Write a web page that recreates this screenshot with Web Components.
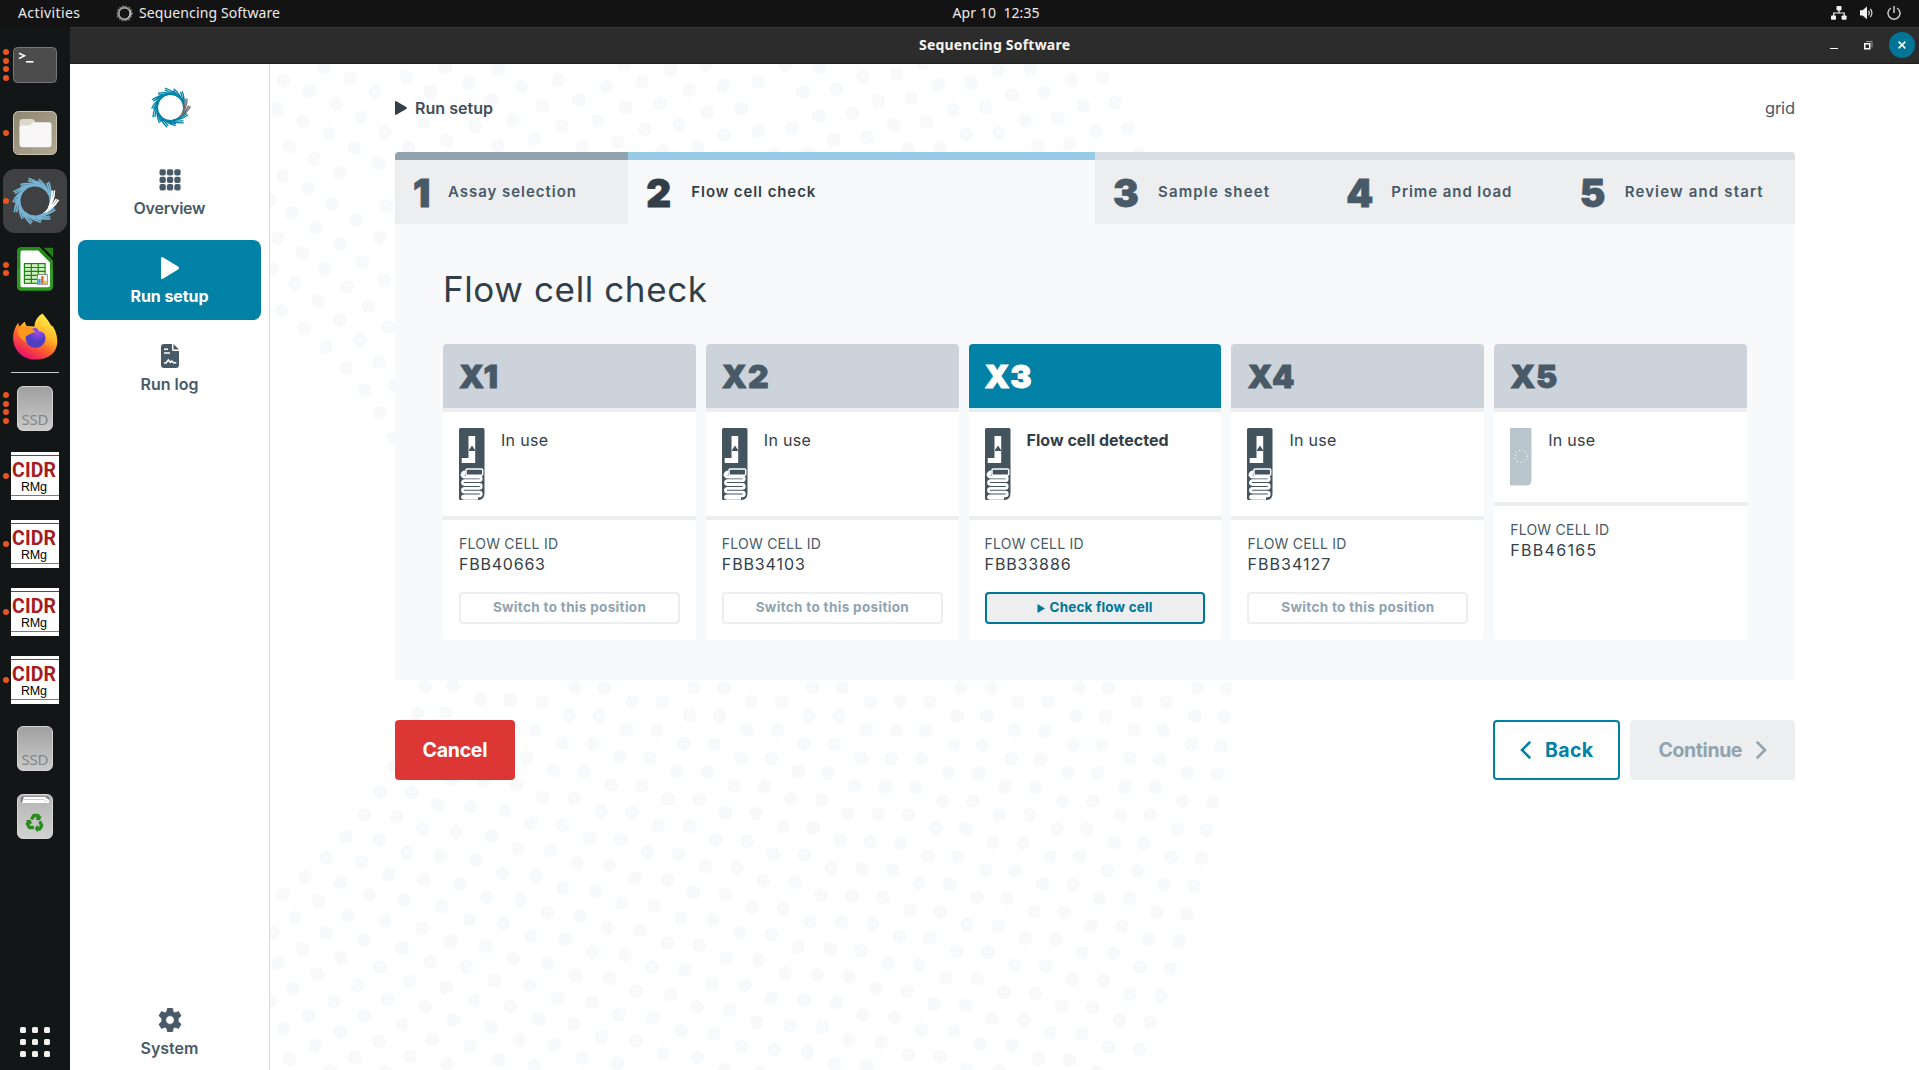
<!DOCTYPE html>
<html lang="en">
<head>
<meta charset="utf-8">
<title>Sequencing Software</title>
<style>
html,body{margin:0;height:100%;overflow:hidden;background:#fff}
body{font-family:Inter,"Liberation Sans",Arial,sans-serif}
</style>
</head>
<body>
<desktop-shell></desktop-shell>
<script>
const def=(name,html,setup)=>{
  const t=document.createElement('template');t.innerHTML=html;
  customElements.define(name,class extends HTMLElement{
    constructor(){super();this.attachShadow({mode:'open'}).append(t.content.cloneNode(true));if(setup)setup(this,this.shadowRoot)}
  });
};

/* Ring of swept double-stroke blades used as the application mark */
const swirl=(main,accent,w)=>{
  let s='';const n=14;
  const p=(r,a)=>(r*Math.cos(a)).toFixed(2)+' '+(r*Math.sin(a)).toFixed(2);
  for(let i=0;i<n;i++){
    const a=(i*360/n-3)*Math.PI/180,R=i%2?18.9:20.1,c=(i===0||i===n-1)?accent:main;
    s+=`<path d="M${p(R,a)}Q${p(16.8,a+.5)} ${p(13.5,a+1.3)}M${p(R-1.7,a-.05)}Q${p(15.2,a+.42)} ${p(13.1,a+1.05)}" stroke="${c}" stroke-width="${w}" fill="none"/>`;
  }
  return `<svg viewBox="-20.5 -20.5 41 41" width="100%" height="100%">${s}</svg>`;
};
def('swirl-mark','<style>:host{display:block;width:40px;height:40px}svg{display:block;overflow:visible}</style><div style="height:100%"></div>',(h,r)=>{
  r.querySelector('div').innerHTML=swirl(h.getAttribute('main'),h.getAttribute('accent'),h.getAttribute('w')||1.5);
});

/* ---------- desktop bars ---------- */
def('top-bar',`<style>
:host{display:grid;grid-template-columns:1fr auto 1fr;height:27px;background:#131313;color:#ececec;font:14px/22px "Noto Sans",sans-serif;align-items:center;box-sizing:border-box;padding:0 18px 0 18px}
.l{display:flex;align-items:center}.l swirl-mark{width:17px;height:17px;margin:0 6px 0 36px}
.clock{margin-left:73px}
.r{display:flex;justify-content:flex-end;align-items:center;gap:12px;padding-bottom:1px}svg{display:block}fit-text{margin-top:-1px}
</style>
<div class="l"><fit-text w="62">Activities</fit-text><swirl-mark main="#bdbdbd" accent="#fff" w="1.3"></swirl-mark><fit-text w="141">Sequencing Software</fit-text></div>
<fit-text class="clock" w="87">Apr 10  12:35</fit-text>
<div class="r">
<svg width="16" height="14" viewBox="0 0 16 14" fill="#f2f2f2"><rect x="5.500" y="0" width="5" height="4.400" rx=".8"/><rect x="0" y="9.400" width="5" height="4.400" rx=".8"/><rect x="10.600" y="9.400" width="5" height="4.400" rx=".8"/><path d="M8 4v3M2.700 10V7h10.500v3" fill="none" stroke="#f2f2f2" stroke-width="1.200"/></svg>
<svg width="16" height="14" viewBox="0 0 16 14" fill="#f2f2f2"><path d="M1 4.300h2.600L8 .6v12.600L3.600 9.600H1z"/><path d="M9.600 4.600q1.600 2.400 0 4.800M11.400 2.800q3 4.200 0 8.400" fill="none" stroke="#d8d8d8" stroke-width="1.200"/></svg>
<svg width="14" height="14" viewBox="0 0 14 14" fill="none" stroke="#d6d6d6" stroke-width="1.400"><path d="M4 2a6 6 0 1 0 6 0M7 0v7"/></svg>
</div>`);

def('title-bar',`<style>
:host{display:grid;grid-template-columns:1fr auto 1fr;height:37px;background:#2c2c2c;border-top:1px solid #3b3b3b;border-bottom:1px solid #1f1f1f;box-sizing:border-box;align-items:center;color:#f5f5f5;font:bold 14px/22px "Noto Sans",sans-serif;padding-right:4px}
.t{margin:-2px 0 0 4px}
.r{display:flex;justify-content:flex-end;align-items:center}
.m{width:8px;height:1px;background:#fff;margin:5px 26px 0 0}.c{width:26px;height:26px;border-radius:50%;background:#007595;display:grid;place-items:center;margin-left:16px;margin-top:-1px}svg{display:block}
</style><span></span><fit-text class="t" w="151">Sequencing Software</fit-text>
<div class="r"><i class="m"></i><svg width="9" height="9" viewBox="0 0 9 9"><rect x=".75" y="2.750" width="5" height="5" fill="none" stroke="#fff" stroke-width="1.500"/><path d="M2 .5h6v6" fill="none" stroke="#999"/></svg><span class="c"><svg width="8" height="8" viewBox="0 0 8 8"><path d="M.6.6l6.800 6.800M7.400.6L.6 7.400" stroke="#fff" stroke-width="1.500"/></svg></span></div>`);

/* ---------- dock ---------- */
def('dock-item',`<style>
:host{display:flex;height:68px;width:70px;align-items:center}
.d{width:9px;padding-left:3px;box-sizing:border-box;display:flex;flex-direction:column;gap:2.700px;position:relative;z-index:1}
.d i{width:6px;height:6px;border-radius:50%;background:#e95420}
.b{width:64px;height:64px;margin-left:-6px;border-radius:12px;display:grid;place-items:center}
:host([active]) .b{background:#3f4042}
</style><div class="d"></div><div class="b"><slot></slot></div>`,(h,r)=>{
  r.querySelector('.d').innerHTML='<i></i>'.repeat(+h.getAttribute('dots')||0);
});
def('cidr-icon',`<style>:host{display:flex;flex-direction:column;align-items:center;width:48px;height:48px;background:#fff;box-sizing:border-box;padding-top:3px}
hr{width:48px;height:1px;margin:0;border:0;background:#bb1e2c}b{font:bold 19.500px/24px Roboto,sans-serif;color:#a51d1d;margin-top:3px;margin-left:-2px;height:21px}
span{font:12.500px/14px "Liberation Sans",sans-serif;color:#000;height:15px;margin-left:-2px}hr+b+span+hr{background:#d0545c}</style>
<hr><b><fit-text w="44">CIDR</fit-text></b><span><fit-text w="26">RMg</fit-text></span><hr>`);
def('ssd-icon',`<style>:host{display:flex;align-items:flex-end;justify-content:center;width:36px;height:45px;border-radius:6px;box-sizing:border-box;border:1px solid #d2d2d2;background:linear-gradient(#a0a0a0,#cbcbcb);color:#858585;font:15px/18px "Noto Sans",sans-serif;padding-bottom:2px}</style><fit-text w="27">SSD</fit-text>`);
def('side-dock',`<style>
:host{display:flex;flex-direction:column;width:70px;background:#121617;padding-top:4px;box-sizing:border-box}
.sep{height:1px;margin:1px 11px;background:#c9cccc}svg{display:block}.sp{flex:1}
.apps{display:grid;grid-template-columns:repeat(3,6px);gap:6px;padding:0 0 13px 20px}.apps i{height:6px;border-radius:1.500px;background:#f3f1ee}
</style>
<dock-item dots="4"><svg width="44" height="36" viewBox="0 0 44 36"><rect x=".5" y=".5" width="43" height="35" rx="4" fill="#4c4c4c" stroke="#777"/><path d="M6 6.200l5.500 2.600L6 11.500" fill="none" stroke="#fff" stroke-width="1.500"/><path d="M13 14.800h7.500" stroke="#fff" stroke-width="1.600"/></svg></dock-item>
<dock-item dots="1"><svg width="44" height="44" viewBox="0 0 44 44"><defs><linearGradient id="g" x2="1" y2="1"><stop stop-color="#8f8672"/><stop offset="1" stop-color="#aea792"/></linearGradient></defs><rect x=".5" y=".5" width="43" height="43" rx="5" fill="url(#g)" stroke="#c9c4b4"/><path d="M6.500 11q0-3 3-3h9.500q1.500 0 2.500 1.500l1.500 2.500h12v8h-28.500z" fill="#dcd8ca"/><path d="M6.500 16.500q0-2 2-2h8l3-2.500q.8-.8 2-.8h14.500q2.500 0 2.500 2.500v19.500q0 3-3 3h-26q-3 0-3-3z" fill="#f8f7f5"/></svg></dock-item>
<dock-item dots="1" active><swirl-mark style="width:48px;height:48px" main="#76b2d2" accent="#fff" w="1.4"></swirl-mark></dock-item>
<dock-item dots="2"><svg width="36" height="44" viewBox="0 0 36.500 44"><path d="M4.500 0H23l13.500 14v25.500q0 4.500-4.500 4.500h-27.500Q0 44 0 39.500v-35Q0 0 4.500 0z" fill="#2e9a20"/><path d="M0 22V4.500Q0 0 4.500 0H23l13.500 14v8z" fill="#278a1b"/><path d="M5 3.300h16.500L33.500 15.500v23q0 2-2 2h-26q-2 0-2-2v-33q0-2.200 1.500-2.200z" fill="#fff"/><path d="M27 .5h9.500v9.500z" fill="#257f18"/><g fill="#cdf2c0" stroke="#1b8212" stroke-width="1.200"><rect x="7.500" y="16.500" width="21" height="20"/><path d="M7.500 20.500h21M7.500 24.500h21M7.500 28.500h21M7.500 32.500h21M14.500 16.500v20M21.500 16.500v20" fill="none"/></g><rect x="20.700" y="27.700" width="10" height="9.800" fill="#fff" stroke="#888"/><path d="M21.500 32h2.500v5h-2.500z" fill="#2e9be0"/><path d="M24.500 29.300h2.500v7.700h-2.500z" fill="#e0622c"/><path d="M27.500 34h2.500v3h-2.500z" fill="#f2b01e"/></svg></dock-item>
<dock-item><svg width="46" height="48" viewBox="-.5 .5 46 48"><defs><linearGradient id="f" x1=".8" y1=".05" x2=".25" y2="1"><stop stop-color="#fff04a"/><stop offset=".38" stop-color="#ffb527"/><stop offset=".65" stop-color="#ff5a2c"/><stop offset="1" stop-color="#e4047a"/></linearGradient><radialGradient id="v" cx=".6" cy=".2"><stop stop-color="#a24bee"/><stop offset="1" stop-color="#4d3fc0"/></radialGradient></defs><path d="M30 1c4 5 6 7 8.500 12 1 .5 2 0 2.500 2 8 14 4 32-18 32C8 47 0 35 .600 24 1 18 3.500 13 6 10c0 2 0 3 1 4 2-2 4-4 5-5l2 4.500q4 0 8 .5C22 8 26 3 30 1z" fill="url(#f)"/><circle cx="23" cy="25.500" r="10" fill="url(#v)"/><path d="M6 16c6-4 14-2 17 4-5 0-5 2-8 3s-3 4 0 7c-7-2-11-8-9-14z" fill="#ff961f"/><path d="M23 14c7-1 11 4 11 10-2-4-5-5-7-5z" fill="#ffbd2c"/></svg></dock-item>
<div class="sep"></div>
<dock-item dots="4"><ssd-icon></ssd-icon></dock-item>
<dock-item dots="1"><cidr-icon></cidr-icon></dock-item>
<dock-item dots="1"><cidr-icon></cidr-icon></dock-item>
<dock-item dots="1"><cidr-icon></cidr-icon></dock-item>
<dock-item dots="1"><cidr-icon></cidr-icon></dock-item>
<dock-item><ssd-icon></ssd-icon></dock-item>
<dock-item><svg width="36" height="45" viewBox="0 0 37 45" preserveAspectRatio="none"><defs><linearGradient id="t" x2="0" y2="1"><stop stop-color="#b4b4b4"/><stop offset="1" stop-color="#d2d2d2"/></linearGradient></defs><rect x=".5" y=".5" width="36" height="44" rx="5.500" fill="url(#t)" stroke="#d9d9d9"/><path d="M4 4q0-1.500 2-1.500h25q2 0 2 1.500v4.500H4z" fill="#777"/><path d="M5 9l2-6h22l4 3v3z" fill="#fff"/><path d="M7 5.500h20l4 1.500" fill="none" stroke="#ccc"/><g transform="translate(18.500 28.800)" fill="#2a8a1c"><g id="a"><path d="M-5-4.200L-2.600-8.300Q-2-9 -1-9H2.500Q4-9 4.600-8L5.500-6.300l1.500-.8L5-2.500.2-2.900l1.600-1L.5-6.300-2.300-2.500z"/></g><use href="#a" transform="rotate(120)"/><use href="#a" transform="rotate(240)"/></g></svg></dock-item>
<div class="sp"></div>
<div class="apps"><i></i><i></i><i></i><i></i><i></i><i></i><i></i><i></i><i></i></div>`);

/* ---------- app sidebar ---------- */
def('nav-item',`<style>
:host{display:flex;flex-direction:column;align-items:center;gap:4px;width:183px;height:80px;box-sizing:border-box;padding:16px 0 0 0;color:#485a67;border-radius:8px;font:600 16px/24px Inter,sans-serif}
:host([active]){background:#0081a5;color:#fff;font-weight:700}
.i{height:24px;display:grid;place-items:center}::slotted(svg){display:block;fill:currentColor}
</style><div class="i"><slot name="icon"></slot></div><slot></slot>`);
def('app-sidebar',`<style>
:host{display:flex;flex-direction:column;align-items:center;width:200px;box-sizing:border-box;border-right:1px solid #c9e0e4;background:#fff;padding:23px 0 0;overflow:hidden}
swirl-mark{margin:0 0 24px 1px;width:41px;height:41px;flex:none}nav{display:flex;flex-direction:column;gap:8px}.s{flex:1}nav-item{flex:none}
.bot{margin-bottom:-2px}
</style>
<swirl-mark main="#0084a9" accent="#6e6f73" w="1.3"></swirl-mark>
<nav>
<nav-item><svg slot="icon" width="22" height="22" viewBox="0 0 22 22"><g><rect width="6.300" height="6.300" rx="2" x=".5" y=".3"/><rect width="6.300" height="6.300" rx="2" x="7.900" y=".3"/><rect width="6.300" height="6.300" rx="2" x="15.300" y=".3"/><rect width="6.300" height="6.300" rx="2" x=".5" y="7.700"/><rect width="6.300" height="6.300" rx="2" x="7.900" y="7.700"/><rect width="6.300" height="6.300" rx="2" x="15.300" y="7.700"/><rect width="6.300" height="6.300" rx="2" x=".5" y="15.100"/><rect width="6.300" height="6.300" rx="2" x="7.900" y="15.100"/><rect width="6.300" height="6.300" rx="2" x="15.300" y="15.100"/></g></svg><fit-text w="72">Overview</fit-text></nav-item>
<nav-item active><svg slot="icon" width="18" height="22" viewBox="0 0 18 22"><path d="M0 1.600Q0-.8 2.300.5L17 9.600q2 1.400 0 2.800L2.300 21.500Q0 22.800 0 20.400z"/></svg><fit-text w="78">Run setup</fit-text></nav-item>
<nav-item><svg slot="icon" width="18" height="24" viewBox="0 0 18 24"><path fill-rule="evenodd" d="M3 0H11V5.500Q11 7 12.500 7H18V21q0 3-3 3H3q-3 0-3-3V3Q0 0 3 0zM3 4.500V6H7V4.500zM3 8.300V9.800H9V8.300z"/><path d="M12.500 0L18 5.500h-5.500z"/><path d="M3 19h2l2.300-3 2 2.300 1.500-1.300 1.700 1.700h2.800" fill="none" stroke="#fff" stroke-width="1.600"/></svg><fit-text w="58">Run log</fit-text></nav-item>
</nav><div class="s"></div>
<nav-item class="bot"><svg slot="icon" width="24" height="24" viewBox="0 0 24 24"><path fill-rule="evenodd" d="M9.500 0h5l.8 3.700 1.700 1 3.600-1.200 2.500 4.300L20.300 10.400v3.200l2.800 2.600-2.500 4.300-3.600-1.200-1.700 1-.8 3.700h-5l-.8-3.700-1.700-1-3.600 1.200L.9 16.200l2.800-2.600v-3.200L.9 7.800l2.500-4.300L7 4.700l1.700-1zM12 7.800a4.200 4.200 0 1 0 0 8.400 4.200 4.200 0 0 0 0-8.400z" stroke="#485a67" stroke-width=".6" stroke-linejoin="round"/></svg><fit-text w="58">System</fit-text></nav-item>`);

/* ---------- dotted backdrop: coordinates on a stretched grid ---------- */
const UX=1/1.568,UY=1/3;
const UPPER='85,20 275,22 358,28 555,8 628,28 683,14 808,16 861,20 1024,10 1141,32 1192,26 452,60 125,54 214,50 21,62 312,69 394,81 528,81 584,65 657,90 711,77 765,66 930,50 982,41 835,96 888,88 1048,75 1099,68 1256,60 1305,52 62,94 165,95 251,95 103,131 347,120 427,139 484,120 558,143 612,130 685,157 739,146 860,168 913,160 954,122 1006,114 1071,150 1122,143 1163,105 1214,98 1276,137 1325,128 11,148 52,183 142,172 180,217 92,221 241,188 322,200 381,180 458,198 514,182 588,207 642,194 712,225 765,214 818,206 884,240 936,232 978,195 1029,187 1092,224 1143,218 1184,181 1235,174 1295,213 1345,207 277,242 357,256 414,236 489,260 545,245 616,272 671,262 790,284 843,280 1000,268 1051,262 1204,256 1254,250 1363,282 217,265 30,260 132,263 70,297 170,310 20,348 109,340 60,387 182,438 98,432 0,420 34,460 72,502 136,480 172,533 11,535 110,552 50,579 145,605 86,627 3,627 179,662 121,681 39,671 75,723 154,738 18,753 185,801 109,779 54,805 141,839 88,861 171,905 119,924 148,990 195,975 172,1060 193,1135';
const LOWER='243,80 287,78 478,83 525,84 665,83 712,84 851,82 897,83 1083,83 1130,84 1269,83 1315,84 1454,83 1500,86 330,118 377,120 427,126 568,125 615,126 755,125 802,126 942,125 988,125 1034,126 1173,125 1220,126 1359,125 1406,126 231,160 276,158 469,167 516,168 658,167 705,168 845,167 892,168 1078,168 1124,169 1264,168 1310,169 1450,168 1496,171 416,210 559,210 606,211 748,210 795,211 935,210 982,211 1028,212 1168,211 1215,212 1355,210 1401,211 458,250 506,252 649,251 696,253 837,251 884,253 1072,254 1118,255 1259,254 1305,254 1445,254 1491,257 403,293 548,292 595,295 739,294 786,296 927,294 974,296 1021,297 1162,296 1208,297 1348,295 1395,297 195,320 444,332 492,334 638,334 685,336 828,335 875,338 1064,338 1111,340 1252,339 1298,339 1438,338 1485,341 285,358 335,364 387,374 535,375 583,377 728,377 775,379 917,379 965,380 1012,381 1153,380 1200,381 1341,380 1388,381 173,395 222,397 428,412 477,416 624,416 673,418 817,418 865,420 1055,423 1102,423 1243,423 1290,423 1431,422 1478,426 263,435 315,441 368,452 519,455 568,458 714,458 762,461 906,461 954,461 1001,465 1144,464 1191,465 1333,464 1380,465 148,465 199,470 409,490 459,495 609,497 658,500 805,500 852,503 1044,505 1091,506 1234,506 1281,507 1423,507 1469,511 240,507 292,516 347,528 501,533 550,538 699,539 748,543 894,542 942,545 989,548 1133,547 1181,549 1324,548 1370,550 119,530 171,539 388,566 439,572 592,577 641,581 789,582 838,585 1032,587 1079,590 1223,590 1270,591 1413,591 1460,595 215,577 268,588 323,601 481,610 532,615 683,620 732,623 880,625 928,627 976,630 1122,629 1169,632 1313,632 1360,634 89,593 143,605 365,640 417,648 572,653 623,659 773,662 823,666 1018,669 1066,673 1211,672 1259,674 1402,674 1449,679 186,643 241,657 297,672 459,685 510,692 664,697 714,702 864,706 913,708 961,712 1108,712 1156,715 1301,714 1348,717 55,650 110,666 340,711 393,720 552,730 602,737 756,741 805,746 1003,750 1051,755 1198,755 1246,757 1391,757 1438,762 155,705 211,721 269,740 435,758 487,767 644,775 695,780 847,784 896,788 945,792 1093,793 1142,797 1287,797 1336,800 20,702 76,722 313,779 366,790 529,804 580,812 736,818 786,824 987,830 1035,835 1184,835 1232,838 1378,838 1425,844 122,764 180,782 239,805 409,829 463,838 623,849 673,856 828,861 878,867 927,872 1077,874 1126,877 1273,878 1322,880 40,773 88,818 147,841 207,864 283,844 338,858 505,876 557,885 715,894 766,900 969,909 1018,915 1168,916 1216,919 1364,921 1411,926 5,818 51,866 111,893 172,921 381,896 435,908 599,922 651,931 808,938 858,945 908,949 1060,953 1109,957 1258,958 1307,962 252,905 308,921 479,945 532,956 693,968 744,976 950,988 999,994 1151,997 1200,1000 1348,1001 1397,1007 12,909 74,942 137,975 219,963 276,983 352,961 407,975 574,994 627,1004 786,1014 837,1020 888,1027 1041,1032 1091,1036 1241,1038 1290,1042 36,986 100,1023 184,1018 243,1040 321,1022 377,1040 451,1013 505,1026 669,1041 721,1051 930,1065 980,1071 1132,1075 1182,1079 1332,1081 1380,1088 0,1023 61,1067 148,1068 208,1094 288,1080 346,1101 421,1077 476,1092 547,1064 601,1073 763,1087 815,1095 866,1102 1021,1110 1072,1114 1224,1118 1273,1122 21,1107 110,1115 171,1144 254,1137 313,1158 390,1140 446,1155 520,1130 574,1142 644,1112 696,1122 908,1140 958,1146 1113,1153 1163,1157 1315,1161 1363,1168 71,1157 31,1196 133,1192 219,1189 278,1212 358,1199 415,1216 490,1195 545,1209 617,1181 670,1192 739,1160 791,1168 843,1176 1001,1185 1051,1190 1205,1196 1254,1200 95,1232 181,1236 713,1229 767,1237 885,1212 936,1219 1093,1228 1143,1233 1296,1236';
def('dot-backdrop','<style>:host{display:block;position:absolute;inset:0;overflow:hidden}svg{display:block}</style><svg width="1649" height="1006"></svg>',(h,r)=>{
  const mk=(list,oy)=>list.split(' ').map(s=>{const[x,y]=s.split(',');return `<circle cx="${(x*UX).toFixed(1)}" cy="${(y*UY+oy).toFixed(1)}" r="7"/>`}).join('');
  r.querySelector('svg').innerHTML='<g fill="#f7f9fb">'+mk(UPPER,-4)+mk(LOWER,596)+'</g>';
});

/* ---------- wizard ---------- */
def('wizard-step',`<style>
:host{display:flex;min-width:0;height:72px;box-sizing:border-box;border-top:8px solid #d9dee2;background:#edeef0;color:#485a67;align-items:center;padding-left:17px}
:host([done]){border-top-color:#90a3ae}
:host([current]){border-top-color:#98c9e6;background:#f8f9fb;color:#323e48}
.n{font:900 38.500px/40px Inter,sans-serif;-webkit-text-stroke:.8px currentColor;width:46px;padding:2px 0 0 1px;box-sizing:border-box}
:host([done]) .n{width:36px}
.t{font:600 15px/24px Inter,sans-serif}
</style><div class="n"></div><div class="t"><slot></slot></div>`,(h,r)=>{r.querySelector('.n').textContent=h.getAttribute('n')});

const CELL=`<svg width="26" height="72" viewBox="0 0 26 72"><path d="M1.500 0H24q1.500 0 1.500 1.500V65q0 7-6 7H1.500Q0 72 0 70.500v-69Q0 0 1.500 0z" fill="#44545f"/><path d="M9.500 8h6.700v27H2.700v-5h6.800z" fill="#fff"/><path d="M13 17.500l3 4.500v1H10v-1z" fill="#44545f"/><path d="M2.500 48q0-4.500 4-4.500" fill="none" stroke="#fff" stroke-width="2"/><rect x="7" y="41" width="16.700" height="6.300" rx="1" fill="#44545f" stroke="#fff" stroke-width="1.500"/><path d="M6 45.500q-2.500 0-2.500 1.700 0 1.800 2.500 1.800H20.500q1.700 0 1.700 1.900t-1.700 1.800H5.500q-2 0-2 1.900t2 1.900H20.500q1.700 0 1.700 1.900t-1.700 1.900H5.500q-2 0-2 1.900t2 1.900H20.500q1.700 0 1.700 1.900t-1.700 1.900H5.500q-2 0-2 1.300t2 1.200H19" fill="none" stroke="#fff" stroke-width="2.800"/></svg>`;
const BLANK=`<svg width="22" height="58" viewBox="0 0 22 58"><path d="M1 0H20.500q1 0 1 1V52q0 5.500-5.500 5.500H1q-1 0-1-1V1Q0 0 1 0z" fill="#b9c5cd"/><circle cx="11.300" cy="28.300" r="6.200" fill="none" stroke="#f2f5f7" stroke-width="1.300" stroke-dasharray="1 2.246"/></svg>`;
def('position-card',`<style>
:host{display:flex;flex-direction:column;flex:1 1 0;height:296px;min-width:0;background:#fff;border-radius:4px;overflow:hidden;color:#323e48}
header{height:68px;box-sizing:border-box;border-bottom:4px solid #edeef0;background:#ccd3da;color:#485a67;font:900 32px/64px Inter,sans-serif;-webkit-text-stroke:.8px currentColor;padding:1px 0 0 16px}
:host([selected]) header{background:#0081a5;color:#fff;border-color:#e0eff4}
.s{display:flex;gap:16px;padding:16px;border-bottom:4px solid #edeef0;font-size:16px;line-height:24px}svg{display:block}
:host([selected]) .s{font-weight:650}
.f{padding:13px 16px 16px}.k{font-size:14px;line-height:21px;color:#485a67;height:20px}.v{font-size:16px;line-height:22px;height:22px;margin-bottom:17px}
.b{height:32px;box-sizing:border-box;border:2px solid #edeef0;border-radius:4px;display:flex;align-items:center;justify-content:center;gap:4px;color:#90a3b0;font-size:13.500px;font-weight:700;line-height:20px;padding-bottom:2px}
:host([selected]) .b{border-color:#007595;background:#edeef0;color:#007595}
</style><header></header><div class="s"><span class="i"></span><span class="st"></span></div>
<div class="f"><div class="k"><fit-text w="99">FLOW CELL ID</fit-text></div><div class="v"></div><slot></slot></div>`,(h,r)=>{
  const g=a=>h.getAttribute(a),q=s=>r.querySelector(s),sel=h.hasAttribute('selected');
  q('header').innerHTML=`<fit-text w="${g('name')=='X1'?39:47}">${g('name')}</fit-text>`;
  q('.i').innerHTML=h.hasAttribute('blank')?BLANK:CELL;
  q('.st').innerHTML=sel?'<fit-text w="142">Flow cell detected</fit-text>':'<fit-text w="47">In use</fit-text>';
  q('.v').innerHTML=`<fit-text w="${g('cell')=='FBB34127'||g('cell')=='FBB34103'?83:86}">${g('cell')}</fit-text>`;
  if(!h.hasAttribute('blank'))q('.f').insertAdjacentHTML('beforeend',sel?
    '<div class="b"><svg width="8" height="9" viewBox="0 0 8 9" style="margin-top:3px"><path d="M.5 0L8 4.500 .5 9z" fill="currentColor"/></svg><fit-text w="103">Check flow cell</fit-text></div>':
    '<div class="b"><fit-text w="153">Switch to this position</fit-text></div>');
});

def('action-button',`<style>
:host{display:flex;align-items:center;justify-content:center;gap:14px;height:60px;box-sizing:border-box;border-radius:4px;font-size:19.500px;font-weight:700;line-height:24px}
:host([kind=cancel]){width:120px;background:#dc3735;color:#fff}
:host([kind=back]){width:127px;border:2px solid #0081a5;color:#0081a5;background:#fff}
:host([kind=next]){width:165px;background:#edeef0;color:#90a3ae;gap:14px;padding-left:1px}
::slotted(svg){display:block;fill:none;stroke:currentColor;stroke-width:2.500;stroke-linecap:round}
</style><slot></slot>`);

def('run-setup',`<style>
:host{display:block;position:relative;flex:1;min-width:0;background:#fff;overflow:hidden}
.w{position:relative;width:1400px;margin-left:125px}
.top{display:flex;justify-content:space-between;align-items:center;height:88px;font-size:16.500px;line-height:24px;color:#485a67}
.top div{display:flex;align-items:center;gap:8px;font-weight:600;font-size:16px;color:#3f4f5b}svg{display:block}
.steps{display:grid;grid-template-columns:1fr 2fr 1fr 1fr 1fr}.box{background:#f8f9fb;border-radius:4px;overflow:hidden;height:528px}
.body{padding:48px}h1{margin:0 0 40px;font-size:35px;font-weight:370;line-height:34px;height:32px;color:#323e48}
.cards{display:flex;gap:10px}.acts{display:flex;gap:10px;margin-top:40px}.acts span{flex:1}
</style><dot-backdrop></dot-backdrop>
<div class="w"><div class="top"><div><svg width="12" height="14" viewBox="0 0 12 14" fill="#323e48"><path d="M0 1.300Q0-.6 1.700.4L11.300 6q1.200 1 0 2L1.700 13.600Q0 14.600 0 12.700z"/></svg><fit-text w="78">Run setup</fit-text></div><fit-text w="30">grid</fit-text></div>
<div class="box"><div class="steps">
<wizard-step n="1" done><fit-text w="128">Assay selection</fit-text></wizard-step>
<wizard-step n="2" current><fit-text w="124">Flow cell check</fit-text></wizard-step>
<wizard-step n="3"><fit-text w="111">Sample sheet</fit-text></wizard-step>
<wizard-step n="4"><fit-text w="120">Prime and load</fit-text></wizard-step>
<wizard-step n="5"><fit-text w="138">Review and start</fit-text></wizard-step></div>
<div class="body"><h1><fit-text w="264">Flow cell check</fit-text></h1>
<div class="cards"><position-card name="X1" cell="FBB40663"></position-card><position-card name="X2" cell="FBB34103"></position-card><position-card name="X3" cell="FBB33886" selected></position-card><position-card name="X4" cell="FBB34127"></position-card><position-card name="X5" cell="FBB46165" blank></position-card></div></div></div>
<div class="acts"><action-button kind="cancel"><fit-text w="65">Cancel</fit-text></action-button><span></span>
<action-button kind="back"><svg width="11" height="18" viewBox="0 0 11 18"><path d="M9.500 1.500L2 9l7.500 7.500"/></svg><fit-text w="48">Back</fit-text></action-button>
<action-button kind="next"><fit-text w="84">Continue</fit-text><svg width="11" height="18" viewBox="0 0 11 18"><path d="M1.500 1.500L9 9l-7.500 7.500"/></svg></action-button></div></div>`);

def('desktop-shell',`<style>
:host{display:flex;flex-direction:column;width:1919px;height:1070px;overflow:hidden}
.row{display:flex;flex:1;min-height:0}.win{display:flex;flex-direction:column;flex:1;min-width:0}
</style><top-bar></top-bar><div class="row"><side-dock></side-dock><div class="win"><title-bar></title-bar><div class="row"><app-sidebar></app-sidebar><run-setup></run-setup></div></div></div>`);

/* Text whose tracking is set so the line takes the given width */
customElements.define('fit-text',class extends HTMLElement{
  constructor(){super();this.attachShadow({mode:'open'}).innerHTML='<style>:host{display:inline-block;white-space:pre}span{display:inline-block}</style><span><slot></slot></span>'}
  connectedCallback(){
    const s=this.shadowRoot.querySelector('span'),n=this.textContent.length,w=+this.getAttribute('w');
    const ls=(w-s.getBoundingClientRect().width)/(n-1);
    s.style.letterSpacing=ls+'px';s.style.marginRight=-ls+'px';
  }
});
</script>
</body>
</html>
